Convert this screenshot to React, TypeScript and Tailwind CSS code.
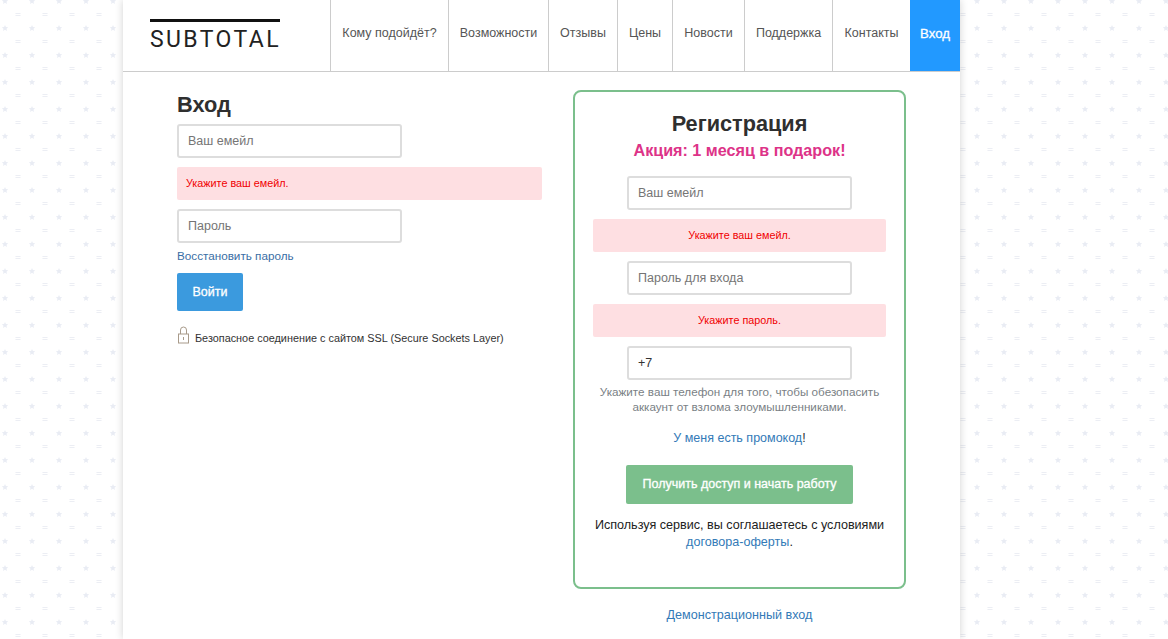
import React from "react";

const navItems = [
  { label: "Кому подойдёт?", width: "w-[118px]" },
  { label: "Возможности", width: "w-[100px]" },
  { label: "Отзывы", width: "w-[69px]" },
  { label: "Цены", width: "w-[55px]" },
  { label: "Новости", width: "w-[72px]" },
  { label: "Поддержка", width: "w-[88px]" },
  { label: "Контакты", width: "w-[78px]" },
];

function Field({ placeholder, value }: { placeholder?: string; value?: string }) {
  return (
    <input
      className="block w-[225px] h-[34px] px-[9px] border-2 border-[#dddddd] rounded-[3px] bg-white text-[12.5px] text-[#333333] placeholder:text-[#757575] outline-none"
      placeholder={placeholder}
      defaultValue={value}
    />
  );
}

function ErrorBox({ children, center }: { children: React.ReactNode; center?: boolean }) {
  return (
    <div className={`h-[33px] flex items-center bg-[#fedfe2] rounded-[2px] text-[10.8px] text-[#f00000] ${center ? "justify-center" : "pl-[9px]"}`}>
      {children}
    </div>
  );
}

function LoginForm() {
  return (
    <div className="w-[365px] pt-[19px]">
      <h2 className="text-[21.8px] leading-[28px] font-bold text-[#2f2f2f] mb-[5px]">Вход</h2>
      <Field placeholder="Ваш емейл" />
      <div className="mt-[9px] mb-[9px]">
        <ErrorBox>Укажите ваш емейл.</ErrorBox>
      </div>
      <Field placeholder="Пароль" />
      <a className="block mt-[6px] text-[11.7px] leading-[14px] text-[#3a6ea5]">Восстановить пароль</a>
      <button className="block mt-[10px] w-[66px] h-[38px] bg-[#3b9ade] rounded-[2px] text-white text-[12.5px] [-webkit-text-stroke:0.3px_white]">
        Войти
      </button>
      <div className="flex items-start mt-[17px] gap-[5px] text-[10.85px] text-[#333333]">
        <svg className="-mt-[2px]" width="13" height="18" viewBox="0 0 13 18" fill="none" stroke="#a89a8a" strokeWidth="1">
          <path d="M3.5 8V4a3 3 0 0 1 6 0v4" />
          <rect x="1.5" y="8" width="10" height="9" />
          <path d="M6.5 11v3" />
        </svg>
        <span className="mt-[3px] leading-[14px]">Безопасное соединение с сайтом SSL (Secure Sockets Layer)</span>
      </div>
    </div>
  );
}

function RegisterForm() {
  return (
    <div>
      <div className="w-[333px] h-[499px] border-2 border-[#7bbf8c] rounded-[8px] px-[18px] pt-[18px]">
        <h2 className="text-[21.7px] leading-[28px] font-bold text-[#2f2f2f] text-center">Регистрация</h2>
        <div className="text-[16.15px] leading-[20px] mt-[2px] font-bold text-[#dd3388] text-center">Акция: 1 месяц в подарок!</div>
        <div className="flex justify-center mt-[16px]">
          <Field placeholder="Ваш емейл" />
        </div>
        <div className="my-[9px]">
          <ErrorBox center>Укажите ваш емейл.</ErrorBox>
        </div>
        <div className="flex justify-center">
          <Field placeholder="Пароль для входа" />
        </div>
        <div className="my-[9px]">
          <ErrorBox center>Укажите пароль.</ErrorBox>
        </div>
        <div className="flex justify-center">
          <Field value="+7" />
        </div>
        <p className="mt-[4px] text-[11.7px] leading-[15px] text-[#7a7f85] text-center">
          Укажите ваш телефон для того, чтобы обезопасить
          <br />
          аккаунт от взлома злоумышленниками.
        </p>
        <p className="mt-[17px] text-[12.5px] leading-[15px] text-center text-[#333333]">
          <a className="text-[#337ab7]">У меня есть промокод</a>!
        </p>
        <button className="block mx-auto mt-[19px] w-[227px] h-[39px] pb-[1px] bg-[#7bbf8c] rounded-[2px] text-white text-[12.5px] [-webkit-text-stroke:0.3px_white]">
          Получить доступ и начать работу
        </button>
        <p className="mt-[13px] text-[12.6px] leading-[17px] text-center text-[#222222]">
          Используя сервис, вы соглашаетесь с условиями
          <br />
          <a className="text-[#337ab7]">договора-оферты</a>.
        </p>
      </div>
      <a className="block mt-[18px] text-[12.6px] leading-[16px] text-center text-[#337ab7]">Демонстрационный вход</a>
    </div>
  );
}

export default function App() {
  return (
    <div
      className="h-[639px] overflow-hidden font-['Liberation_Sans',Arial,sans-serif] bg-white bg-[position:-2px_-6px] bg-[length:27px_27px] bg-[url('data:image/svg+xml,%3Csvg%20xmlns=%22http://www.w3.org/2000/svg%22%20width=%2227%22%20height=%2227%22%3E%3Cpath%20d=%22M7%204l.9%202.1%202.3.2-1.7%201.5.5%202.2-2-1.2-2%201.2.5-2.2-1.7-1.5%202.3-.2z%22%20fill=%22%23e9ecf4%22/%3E%3Cpath%20d=%22M17.5%2019h5v1h-5zM17.5%2021h5v1h-5z%22%20fill=%22%23eceef4%22/%3E%3C/svg%3E')]"
    >
      <div className="ml-[123px] w-[837px] h-full bg-white shadow-[0_0_8px_rgba(0,0,0,0.18)]">
        <header className="flex h-[72px] border-b border-[#cccccc]">
          <div className="w-[207px] pl-[27px] pt-[19px]">
            <div className="w-[130px] border-t-[3px] border-[#111111] pt-[3px] font-['Roboto',sans-serif] text-[23px] leading-[30px] tracking-[2.4px] text-[#222222] whitespace-nowrap">
              SUBTOTAL
            </div>
          </div>
          <nav className="flex flex-1">
            {navItems.map((item) => (
              <a
                key={item.label}
                className={`${item.width} flex items-center justify-center pb-[4px] border-l border-[#cccccc] text-[12.5px] text-[#555555] whitespace-nowrap`}
              >
                {item.label}
              </a>
            ))}
            <a className="flex-1 flex items-center justify-center pb-[4px] bg-[#2299ff] text-white text-[13.2px] [-webkit-text-stroke:0.3px_white]">Вход</a>
          </nav>
        </header>
        <main className="flex pl-[54px] gap-[31px] pt-[18px]">
          <div className="-mt-[18px]">
            <LoginForm />
          </div>
          <RegisterForm />
        </main>
      </div>
    </div>
  );
}
